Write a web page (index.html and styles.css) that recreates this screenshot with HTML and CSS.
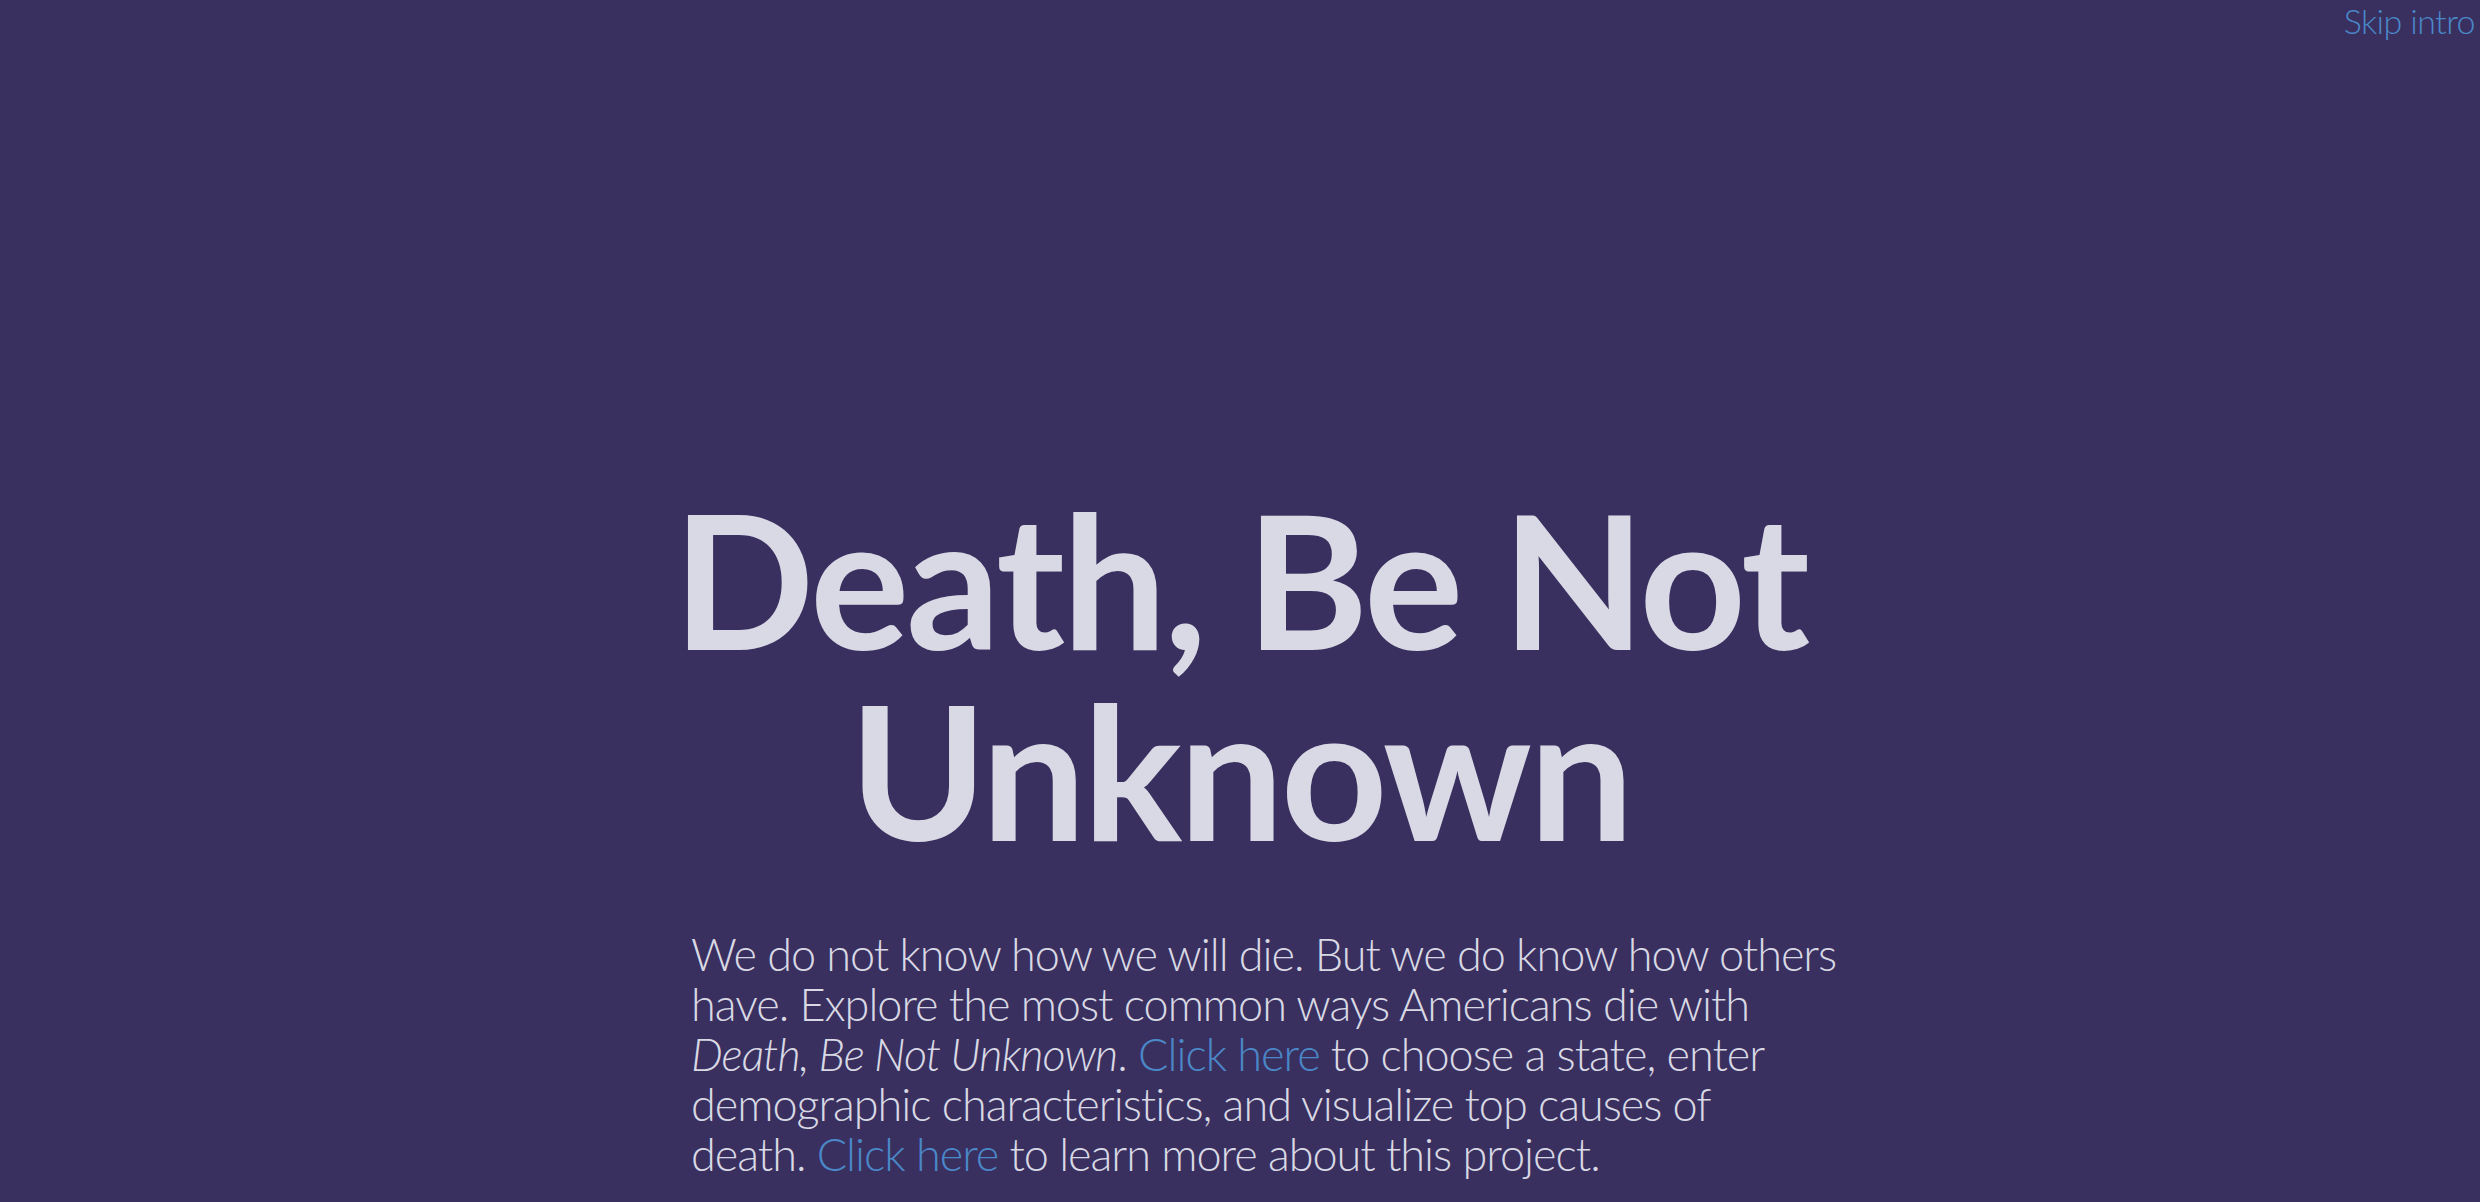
FILE: index.html
```html
<!DOCTYPE html>
<html lang="en">
<head>
<meta charset="utf-8">
<title>Death, Be Not Unknown</title>
<link rel="stylesheet" href="styles.css">
</head>
<body>
<header class="topbar">
  <a class="skip" href="#">Skip intro</a>
</header>
<main class="intro">
  <h1 class="title"><span class="title-line">Death, Be Not</span><span class="title-line">Unknown</span></h1>
  <p class="lede">We do not know how we will die. But we do know how others<br>have. Explore the most common ways Americans die with<br><em>Death, Be Not Unknown</em>. <a href="#">Click here</a> to choose a state, enter<br>demographic characteristics, and visualize top causes of<br>death. <a href="#">Click here</a> to learn more about this project.</p>
</main>
</body>
</html>
```

FILE: styles.css
```css
html, body {
  margin: 0;
  padding: 0;
  height: 100%;
}
body {
  background: #3a3060;
  color: #d8d9e4;
  font-family: "Lato", "Noto Sans", sans-serif;
  overflow: hidden;
}
a {
  color: #4a88c8;
  text-decoration: none;
}
.topbar {
  display: flex;
  justify-content: flex-end;
  padding: 0 5px 0 0;
  height: 40px;
}
.skip {
  font-size: 34px;
  line-height: 42px;
  font-weight: 300;
  letter-spacing: -0.6px;
}
.intro {
  display: flex;
  flex-direction: column;
  align-items: center;
  padding-top: 443px;
}
.title {
  margin: 0;
  font-size: 186px;
  line-height: 191px;
  font-weight: 700;
  text-align: center;
  letter-spacing: -3.2px;
  display: flex;
  flex-direction: column;
  align-items: center;
}
.title-line {
  display: block;
}
.lede {
  align-self: flex-start;
  margin: 64px 0 0 calc(50% - 549px);
  font-size: 45px;
  line-height: 50px;
  font-weight: 300;
  letter-spacing: -1px;
  white-space: nowrap;
}
.lede em {
  font-style: italic;
}
```
